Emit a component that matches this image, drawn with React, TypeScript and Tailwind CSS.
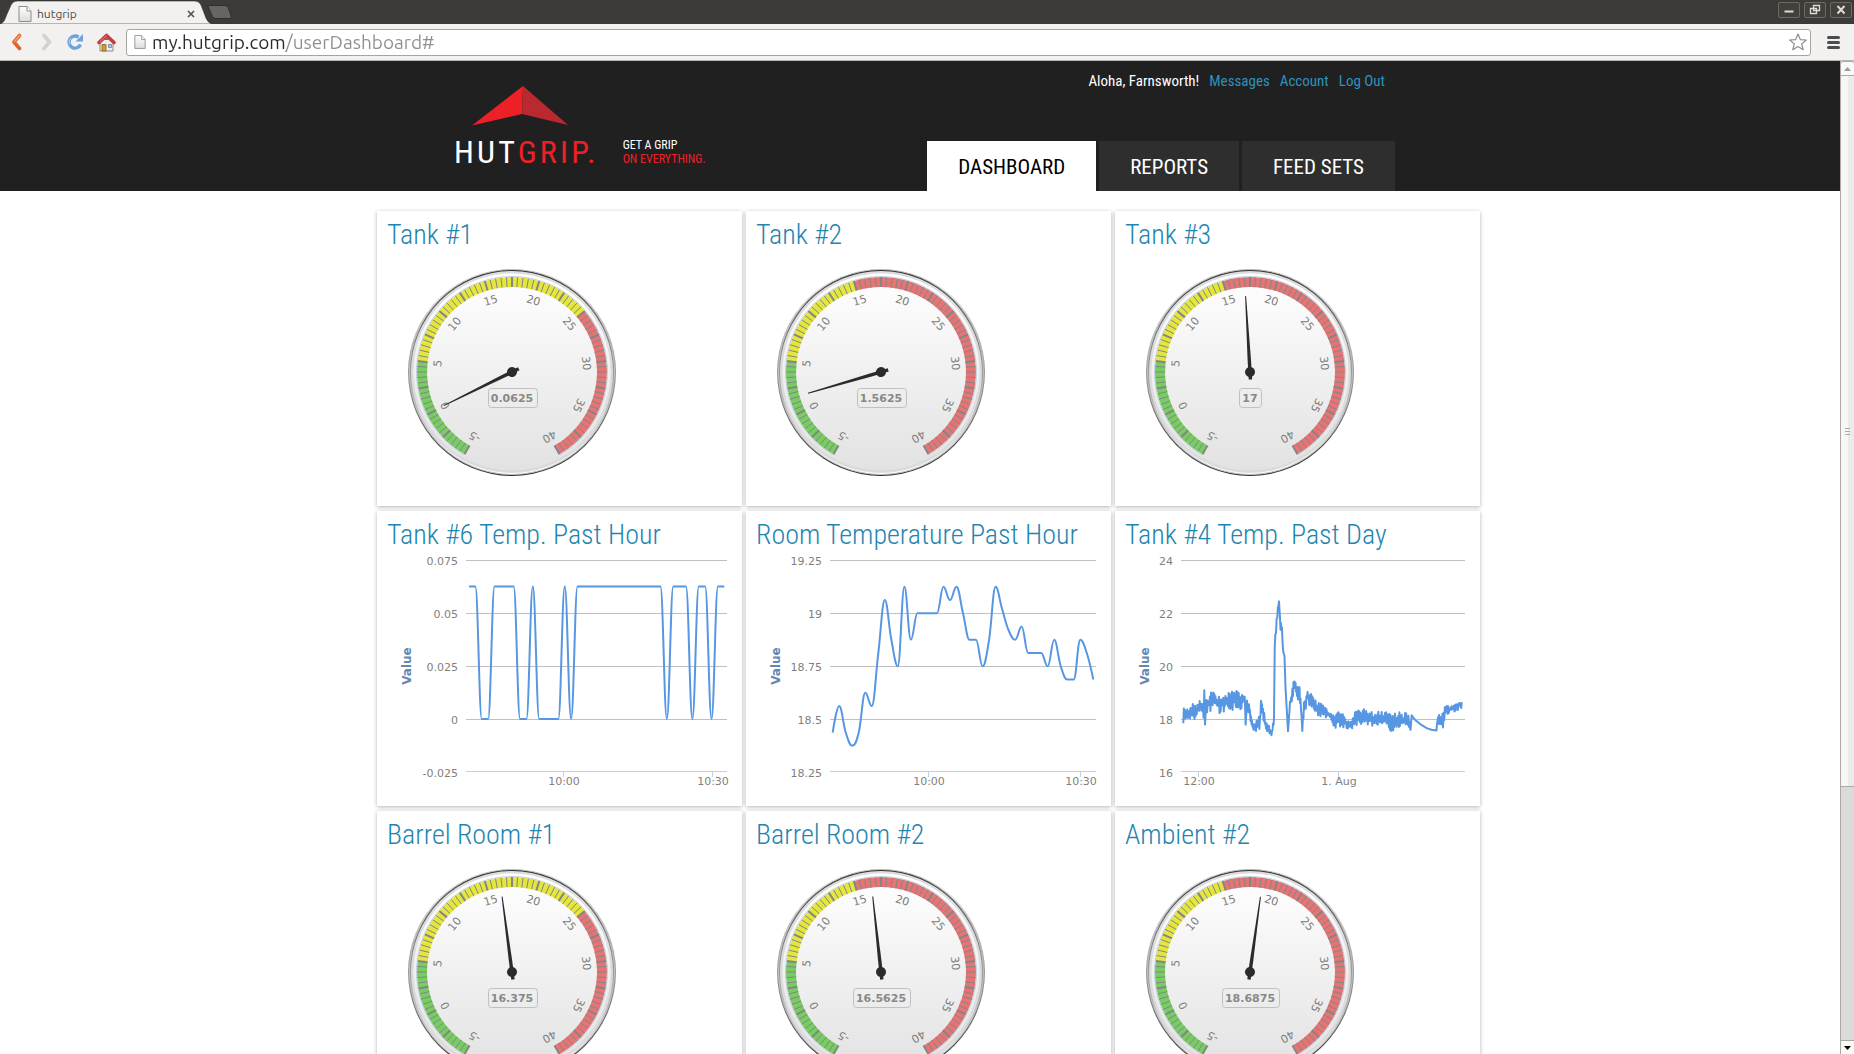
import React from 'react';

const DIN = "font-['Roboto_Condensed','Roboto',sans-serif]";
const VERDANA = 'DejaVu Sans, Verdana, sans-serif';

/* ---------- Browser chrome ---------- */

function PageIcon({ className }: { className: string }) {
  return (
    <svg viewBox="0 0 14 16" className={className} aria-hidden="true">
      <defs>
        <linearGradient id="paper" x1="0" y1="0" x2="0" y2="1">
          <stop offset="0" stopColor="#fff" />
          <stop offset="1" stopColor="#dcdcdc" />
        </linearGradient>
      </defs>
      <path d="M1 .5h8L13 5v10.5H1z" fill="url(#paper)" stroke="#8b8b8b" />
      <path d="M9 .5V5h4" fill="#fff" stroke="#8b8b8b" />
    </svg>
  );
}

function TitleBar() {
  return (
    <div className="flex h-6 shrink-0 items-start justify-between bg-[#3c3b37]">
      <div className="flex h-full">
        <div className="relative flex h-full w-[212px] items-center pt-[3px] pr-[15px] pl-[18px]">
          <svg viewBox="0 0 212 24" className="absolute inset-0 h-full w-full" aria-hidden="true">
            <path
              d="M0 24C4 23 5 19 7 14L11 5Q13 1 17 1H195Q199 1 201 5L206 18Q208 23 212 24Z"
              fill="#f2f1f0"
              stroke="#2b2a27"
              strokeWidth=".6"
            />
          </svg>
          <PageIcon className="relative h-4 w-[14px]" />
          <span className="relative ml-[5px] flex-1 font-['Ubuntu','Noto_Sans',sans-serif] text-xs text-[#4a4a4a]">
            hutgrip
          </span>
          <button type="button" aria-label="Close tab" className="relative flex h-3 w-3 items-center justify-center">
            <svg viewBox="0 0 8 8" className="h-2 w-2" aria-hidden="true">
              <path d="M1 1l6 6M7 1L1 7" stroke="#555" strokeWidth="1.7" />
            </svg>
          </button>
        </div>
        <button type="button" aria-label="New tab" className="-ml-[5px] flex h-full items-center">
          <svg viewBox="0 0 26 16" className="h-4 w-[26px]" aria-hidden="true">
            <path
              d="M2 1.5h16q2.500 0 3.200 2l3 8.500q.8 2.500-1.700 2.500H9q-2.500 0-3.500-2L1.200 3Q.8 1.500 2 1.500z"
              fill="#666561"
              stroke="#2f2e2b"
            />
          </svg>
        </button>
      </div>
      <div className="flex gap-1 pt-[2px] pr-[2px]">
        {[
          ['Minimize', 'M6.500 9.500h9'],
          ['Restore', 'M9.500 3.500h6v5h-6zM6.500 6.500h6v5h-6z'],
          ['Close', 'M7.500 4l7 7.500M14.500 4l-7 7.500'],
        ].map(([label, d]) => (
          <button
            key={label}
            type="button"
            aria-label={label}
            className="h-4 w-[22px] rounded-[2px] border border-[#6b6a66] bg-[#42413d]"
          >
            <svg viewBox="1 1 20 14" className="h-full w-full" aria-hidden="true">
              <path d={d} fill="none" stroke="#dfdbd2" strokeWidth={label === 'Restore' ? 1.300 : 2} />
            </svg>
          </button>
        ))}
      </div>
    </div>
  );
}

function Toolbar() {
  return (
    <div className="flex h-[37px] shrink-0 items-center border-b border-[#b7b6b2] bg-[#f2f1f0] pr-[14px] pl-[10px]">
      <div className="flex items-center gap-[13px]">
        <button type="button" aria-label="Back" className="h-[18px] w-[14px]">
          <svg viewBox="0 0 14 18" aria-hidden="true">
            <path d="M9.500 2.500L4 9l5.500 6.500" fill="none" stroke="#e2622f" strokeWidth="3.600" strokeLinecap="round" strokeLinejoin="round" />
            <path d="M9.500 2.500L4.500 8.500" fill="none" stroke="#f0a070" strokeWidth="1.600" strokeLinecap="round" />
          </svg>
        </button>
        <button type="button" aria-label="Forward" className="ml-[2px] h-[18px] w-[14px]">
          <svg viewBox="0 0 14 18" aria-hidden="true">
            <path d="M5 2.500L10.500 9 5 15.500" fill="none" stroke="#d3d2d0" strokeWidth="3.600" strokeLinecap="round" strokeLinejoin="round" />
          </svg>
        </button>
        <button type="button" aria-label="Reload" className="h-[18px] w-[18px]">
          <svg viewBox="0 0 18 18" aria-hidden="true">
            <path d="M14.500 11.500A6 6 0 1 1 12.500 4.200" fill="none" stroke="#6ba3dc" strokeWidth="3.400" />
            <path d="M9.500 8.500h7.500V1z" fill="#6ba3dc" />
            <path d="M4 11.500A5.500 5.500 0 0 1 5 5" fill="none" stroke="#a5c8ec" strokeWidth="1.200" />
          </svg>
        </button>
        <button type="button" aria-label="Home" className="h-[19px] w-[19px]">
          <svg viewBox="0 0 19 19" aria-hidden="true">
            <path d="M3 8.500L9.500 3l6.500 5.500V18H3z" fill="#efeeec" stroke="#8b8a86" />
            <path d="M2 9.500L9.500 2.500 17 9.500" fill="none" stroke="#c23e3e" strokeWidth="3.600" strokeLinejoin="round" strokeLinecap="round" />
            <path d="M9.500 3L5.500 7h8z" fill="#c94a4a" />
            <path d="M2.500 9l7-6.500" stroke="#e37f7f" strokeWidth="1" />
            <path d="M5 11.500h4V18H5z" fill="#d59b2d" stroke="#8a6420" strokeWidth=".8" />
            <path d="M11.500 11.500h3v3h-3z" fill="#aac6e6" stroke="#6d7f99" strokeWidth=".8" />
          </svg>
        </button>
      </div>
      <div className="ml-[10px] flex h-[27px] flex-1 items-center rounded-[3px] border border-[#a5a4a0] bg-white pr-[3px] pl-[7px]">
        <PageIcon className="h-4 w-3" />
        <input
          type="text"
          aria-label="Address"
          defaultValue="my.hutgrip.com/userDashboard#"
          className="ml-[6px] h-6 min-w-0 flex-1 bg-[linear-gradient(90deg,#2b2b2b_134px,#8f8f8f_134px)] bg-clip-text font-['Ubuntu','Noto_Sans',sans-serif] text-[19px] text-transparent outline-none"
        />
        <button type="button" aria-label="Bookmark" className="h-[18px] w-[18px]">
          <svg viewBox="0 0 18 18" aria-hidden="true">
            <path
              d="M9 1l2.300 5.600 6 .4-4.600 3.900 1.500 5.900L9 13.600l-5.200 3.200 1.500-5.900L.7 7l6-.4z"
              fill="#fff"
              stroke="#8c8c8c"
              strokeWidth="1.200"
              strokeLinejoin="round"
            />
          </svg>
        </button>
      </div>
      <button type="button" aria-label="Menu" className="ml-4 flex w-[13px] flex-col gap-[2px]">
        <span className="h-[3px] rounded-full bg-[#4c4c4c]" />
        <span className="h-[3px] rounded-full bg-[#4c4c4c]" />
        <span className="h-[3px] rounded-full bg-[#4c4c4c]" />
      </button>
    </div>
  );
}

function Scrollbar() {
  return (
    <div className="flex w-[14px] shrink-0 flex-col border-l border-[#aaa9a6] bg-[#dcdbda]">
      <button type="button" aria-label="Scroll up" className="flex h-[15px] shrink-0 items-center justify-center rounded-t-[3px] border-y border-[#aaa9a6] bg-[#fafaf9]">
        <svg viewBox="0 0 7 4" className="h-1 w-[7px]" aria-hidden="true">
          <path d="M3.500 0L7 4H0z" fill="#999" />
        </svg>
      </button>
      <div className="flex grow-[706] flex-col items-center justify-center gap-[2px] border-b border-[#aaa9a6] bg-linear-to-r from-[#f7f7f5] from-50% to-[#ebebea] to-50%">
        <span className="h-px w-[5px] bg-[#aaa]" />
        <span className="h-px w-[5px] bg-[#aaa]" />
        <span className="h-px w-[5px] bg-[#aaa]" />
      </div>
      <div className="grow-[254]" />
      <button type="button" aria-label="Scroll down" className="flex h-[14px] shrink-0 items-center justify-center border-t border-[#aaa9a6] bg-[#fafaf9]">
        <svg viewBox="0 0 7 4" className="h-1 w-[7px]" aria-hidden="true">
          <path d="M0 0h7L3.500 4z" fill="#000" />
        </svg>
      </button>
    </div>
  );
}

/* ---------- Site header ---------- */

function Header() {
  const tab = 'flex h-[50px] items-center px-[31px] pt-[3px] text-[21px]';
  return (
    <header className={`bg-[#202020] ${DIN}`}>
      <div className="mx-auto flex h-[130px] w-[950px] justify-between">
        <a href="#" className="flex items-end gap-6 pb-[25px] pl-[9px]">
          <span className="flex flex-col">
            <svg viewBox="0 0 96 40" className="ml-[18px] h-10 w-24" aria-hidden="true">
              <path d="M51 0L0 39.500 50 28z" fill="#ee2027" />
              <path d="M51 0L50 28 96 39z" fill="#b9292f" />
            </svg>
            <span className="mt-3 text-[32px] leading-7 tracking-widest text-white">
              HUT<span className="text-[#ee2027]">GRIP.</span>
            </span>
          </span>
          <span className="text-[12px] leading-[14px] text-white">
            GET A GRIP
            <br />
            <span className="text-[#ee2027]">ON EVERYTHING.</span>
          </span>
        </a>
        <div className="flex flex-col items-end justify-between">
          <div className="flex gap-[10px] pt-[9px] pr-[10px] text-[15px] leading-[22px] text-[#2c93be]">
            <span className="text-white">Aloha, Farnsworth!</span>
            <a href="#">Messages</a>
            <a href="#">Account</a>
            <a href="#">Log Out</a>
          </div>
          <nav className="flex gap-[3px] text-white">
            <a href="#" className={`${tab} bg-white text-black`}>DASHBOARD</a>
            <a href="#" className={`${tab} bg-[#2e2e2e]`}>REPORTS</a>
            <a href="#" className={`${tab} bg-[#2e2e2e]`}>FEED SETS</a>
          </nav>
        </div>
      </div>
    </header>
  );
}

/* ---------- Gauge ---------- */

const MIN = -5;
const MAX = 40;
const CX = 135;
const CY = 122;
const toDeg = (v: number) => -150 + ((v - MIN) * 300) / (MAX - MIN);

function polar(r: number, deg: number) {
  const a = (deg * Math.PI) / 180;
  return [CX + r * Math.sin(a), CY - r * Math.cos(a)];
}

function band(from: number, to: number) {
  const a = toDeg(from);
  const b = toDeg(to);
  const large = b - a > 180 ? 1 : 0;
  const [x1, y1] = polar(95, a);
  const [x2, y2] = polar(95, b);
  const [x3, y3] = polar(85, b);
  const [x4, y4] = polar(85, a);
  return `M${x1} ${y1}A95 95 0 ${large} 1 ${x2} ${y2}L${x3} ${y3}A85 85 0 ${large} 0 ${x4} ${y4}Z`;
}

function Gauge({ value, warn }: { value: number; warn: number }) {
  const text = String(value);
  const boxWidth = Math.round(text.replace('.', '').length * 7.65 + (text.includes('.') ? 4 : 0) + 7);
  const ticks = Array.from({ length: 91 }, (_, i) => MIN + i * 0.5);
  const labels = [-5, 0, 5, 10, 15, 20, 25, 30, 35, 40];
  return (
    <svg viewBox="0 0 270 245" width="270" height="245" role="img" aria-label={`Gauge reading ${text}`}>
      <defs>
        <linearGradient id="rimOuter" x1="0" y1="0" x2="0" y2="1">
          <stop offset="0" stopColor="#fff" />
          <stop offset="1" stopColor="#333" />
        </linearGradient>
        <linearGradient id="rimInner" x1="0" y1="0" x2="0" y2="1">
          <stop offset="0" stopColor="#333" />
          <stop offset="1" stopColor="#fff" />
        </linearGradient>
        <linearGradient id="face" x1="0" y1="0" x2="0" y2="1">
          <stop offset="0" stopColor="#fff" />
          <stop offset="1" stopColor="#e2e2e2" />
        </linearGradient>
      </defs>
      <circle cx={CX} cy={CY} r="104" fill="url(#rimOuter)" />
      <circle cx={CX} cy={CY} r="102.500" fill="url(#rimInner)" stroke="#c0c0c0" />
      <circle cx={CX} cy={CY} r="101" fill="#ddd" />
      <circle cx={CX} cy={CY} r="99" fill="url(#face)" stroke="#d0d0d0" strokeWidth=".5" />
      <path d={band(MIN, 5)} fill="#77cc62" />
      <path d={band(5, warn)} fill="#e4e53d" />
      <path d={band(warn, MAX)} fill="#e57575" />
      {ticks.map((v, i) => {
        const [x1, y1] = polar(95, toDeg(v));
        const [x2, y2] = polar(85, toDeg(v));
        return <line key={v} x1={x1} y1={y1} x2={x2} y2={y2} stroke="#858585" strokeWidth={i % 5 === 0 ? 2 : 1} />;
      })}
      <path
        d={`M${polar(95.5, -150).join(' ')}A95.5 95.5 0 1 1 ${polar(95.5, 150).join(' ')}`}
        fill="none"
        stroke="#c0d0e0"
      />
      <g fontFamily={VERDANA} fontSize="11" fill="#7c7c7c" textAnchor="middle">
        {labels.map((v) => {
          const [x, y] = polar(75, toDeg(v));
          return (
            <text key={v} transform={`translate(${x} ${y}) rotate(${toDeg(v)})`} y="4">
              {v}
            </text>
          );
        })}
      </g>
      <rect x={CX - Math.floor(boxWidth / 2) + 0.5} y="138.500" width={boxWidth} height="19" rx="3" fill="none" stroke="#c0c0c0" />
      <text x={CX} y="152" fontFamily={VERDANA} fontSize="11" fontWeight="bold" fill="#888" textAnchor="middle">
        {text}
      </text>
      <g transform={`translate(${CX} ${CY}) rotate(${toDeg(value)})`} fill="#2b2b2b">
        <path d="M-1.700 7.500L-1.700 -12L-.5 -76H.5L1.700 -12L1.700 7.500Z" />
        <circle r="5" />
      </g>
    </svg>
  );
}

/* ---------- Line charts ---------- */

type Point = [number, number];
const GRID = [10.5, 63.5, 116.5, 169.5];

function splinePath(pts: Point[]) {
  const slope = (i: number) => {
    if (i === 0 || i === pts.length - 1) return 0;
    const [x0, y0] = pts[i - 1];
    const [, y1] = pts[i];
    const [x2, y2] = pts[i + 1];
    return (y1 - y0) * (y2 - y1) <= 0 ? 0 : (y2 - y0) / (x2 - x0);
  };
  let d = `M${pts[0][0]} ${pts[0][1]}`;
  for (let i = 1; i < pts.length; i++) {
    const [x0, y0] = pts[i - 1];
    const [x1, y1] = pts[i];
    const h = (x1 - x0) * 0.4;
    const c0 = i === 1 ? [x0, y0] : [x0 + h, y0 + slope(i - 1) * h];
    const c1 = i === pts.length - 1 ? [x1, y1] : [x1 - h, y1 - slope(i) * h];
    d += `C${c0[0]} ${c0[1]} ${c1[0]} ${c1[1]} ${x1} ${y1}`;
  }
  return d;
}

interface ChartProps {
  left: number;
  yLabels: string[];
  xLabels: [number, string][];
  path: string;
}

function LineChart({ left, yLabels, xLabels, path }: ChartProps) {
  return (
    <svg viewBox="0 0 365 245" width="365" height="245" role="img" aria-label="Temperature history">
      {GRID.map((y) => (
        <line key={y} x1={left} x2="350" y1={y} y2={y} stroke="#c0c0c0" />
      ))}
      <line x1={left} x2="350" y1="221.500" y2="221.500" stroke="#c0d0e0" />
      {xLabels.map(([x]) => (
        <line key={x} x1={x + 0.5} x2={x + 0.5} y1="222" y2="227" stroke="#c0d0e0" />
      ))}
      <path d={path} fill="none" stroke="#5796e2" strokeWidth="2" strokeLinejoin="round" />
      <g fontFamily={VERDANA} fontSize="11" fill="#7f7f7f">
        {yLabels.map((t, i) => (
          <text key={t} x={left - 8} y={15 + i * 53} textAnchor="end">
            {t}
          </text>
        ))}
        {xLabels.map(([x, t]) => (
          <text key={t} x={x + 1} y="235" textAnchor="middle">
            {t}
          </text>
        ))}
      </g>
      <text
        transform="translate(34 116) rotate(-90)"
        fontFamily={VERDANA}
        fontSize="12"
        fontWeight="bold"
        fill="#6488b2"
        textAnchor="middle"
      >
        Value
      </text>
    </svg>
  );
}

const sample = (values: number[], x0: number, x1: number, y: (v: number) => number) =>
  splinePath(values.map((v, i): Point => [x0 + (i * (x1 - x0)) / (values.length - 1), y(v)]));

/* Tank #6 toggles between 0 and 0.0625 */
const tank6Path = sample(
  [...'11001111001000010111111111111110111011011'].map(Number),
  92,
  347.3,
  (v) => 169 - v * 132.5,
);

const roomPath = sample(
  [
    18.4375, 18.5625, 18.4375, 18.375, 18.4375, 18.625, 18.5625, 18.8125, 19.0625, 18.875, 18.75, 19.125, 18.875, 19,
    19, 19, 19, 19.125, 19.0625, 19.125, 19, 18.875, 18.875, 18.75, 18.875, 19.125, 19.02, 18.92, 18.875, 18.9375,
    18.8125, 18.8125, 18.8125, 18.75, 18.875, 18.75, 18.6875, 18.6875, 18.875, 18.8125, 18.6875,
  ],
  86.7,
  347.3,
  (v) => 63.3 + (19 - v) * 212,
);

/* x, value, spread of the readings around it */
const DAY: [number, number, number][] = [
  [68.300, 18.15, 0.22], [75, 18.25, 0.25], [80, 18.3, 0.25], [83, 18.5, 0.15], [87.5, 18.5, 0.2], [88.6, 18.1, 0.2],
  [89.300, 19.1, 0], [90, 17.8, 0], [91, 18.5, 0.2], [96, 18.65, 0.3], [101, 18.7, 0.3], [104, 18.6, 0.35],
  [112, 18.7, 0.28], [122, 18.75, 0.28], [127, 18.65, 0.2], [129.7, 18.9, 0.1], [130.6, 17.8, 0], [132, 18.6, 0.1],
  [134, 18.4, 0.15], [136.5, 17.9, 0.1], [138, 17.65, 0.1], [141, 17.8, 0.2], [145, 17.85, 0.2], [146, 18.7, 0],
  [148, 18.25, 0.15], [151, 17.75, 0.15], [154, 17.7, 0.2], [156.5, 17.4, 0], [158, 17.8, 0.2], [159, 18, 0.1],
  [159.7, 20.8, 0.1], [161, 21.3, 0.15], [162.3, 22, 0.15], [164, 22.45, 0], [165.5, 21.5, 0.15], [167, 21.3, 0.2],
  [168, 20.6, 0.05], [169.5, 20.4, 0.1], [170.5, 19.2, 0.05], [173, 17.55, 0], [175, 18.6, 0.1], [178, 19.1, 0.25],
  [179.5, 19.4, 0.05], [182, 19, 0.2], [184.5, 19, 0.2], [186, 18.4, 0.1], [187.3, 17.6, 0.05], [189, 18.5, 0.3],
  [192, 18.9, 0.22], [196, 18.7, 0.2], [201, 18.45, 0.2], [206, 18.35, 0.18], [212, 18.25, 0.15], [217, 18.05, 0.2],
  [219.5, 17.85, 0.15], [224, 18.05, 0.25], [230, 17.9, 0.2], [236, 17.75, 0.15], [240, 18.05, 0.2], [250, 18.1, 0.22],
  [260, 18, 0.22], [270, 18.1, 0.18], [276, 17.85, 0.25], [285, 18, 0.22], [294, 17.95, 0.2], [295.5, 17.6, 0],
  [296.7, 18.15, 0], [300, 17.98, 0], [306, 17.8, 0], [312, 17.66, 0], [317, 17.6, 0], [321.5, 17.58, 0],
  [322.5, 18, 0.15], [328, 18, 0.25], [331, 18.35, 0.15], [340, 18.4, 0.18], [344, 18.6, 0.15], [347.3, 18.4, 0.25],
];

function noisyPath() {
  let seed = 7;
  const random = () => {
    seed = (seed * 16807) % 2147483647;
    return (seed / 2147483647) * 2 - 1;
  };
  let d = '';
  let side = 1;
  for (let i = 0; i < DAY.length - 1; i++) {
    const [x0, v0, s0] = DAY[i];
    const [x1, v1, s1] = DAY[i + 1];
    const n = Math.max(1, Math.round((x1 - x0) / 0.55));
    for (let k = 0; k < n; k++) {
      const t = k / n;
      side = -side;
      const v = v0 + (v1 - v0) * t + side * Math.abs(random()) * (s0 + (s1 - s0) * t) * 1.35;
      d += `${d ? 'L' : 'M'}${x0 + (x1 - x0) * t} ${169.3 - (v - 18) * 26.5}`;
    }
  }
  return d;
}

const dayPath = noisyPath();

/* ---------- Dashboard ---------- */

function Card({ title, children }: { title: string; children: React.ReactNode }) {
  return (
    <section className="h-[295px] bg-white shadow-[0_1px_4px_rgba(0,0,0,0.3)]">
      <h2 className={`h-[39px] pt-2 pl-[10px] text-[28px] leading-[31px] font-light whitespace-nowrap text-[#1f86b0] ${DIN}`}>
        {title}
      </h2>
      {children}
    </section>
  );
}

export default function App() {
  return (
    <div className="flex h-screen flex-col overflow-hidden bg-white">
      <TitleBar />
      <Toolbar />
      <div className="flex min-h-0 flex-1">
        <div className="min-w-0 flex-1 overflow-hidden">
          <Header />
          <main className="mx-auto grid w-[1120px] grid-cols-[repeat(3,365px)] gap-x-1 gap-y-[5px] pt-5 pl-[17px]">
            <Card title="Tank #1"><Gauge value={0.0625} warn={25} /></Card>
            <Card title="Tank #2"><Gauge value={1.5625} warn={15} /></Card>
            <Card title="Tank #3"><Gauge value={17} warn={15} /></Card>
            <Card title="Tank #6 Temp. Past Hour">
              <LineChart
                left={89}
                yLabels={['0.075', '0.05', '0.025', '0', '-0.025']}
                xLabels={[[186, '10:00'], [335, '10:30']]}
                path={tank6Path}
              />
            </Card>
            <Card title="Room Temperature Past Hour">
              <LineChart
                left={84}
                yLabels={['19.25', '19', '18.75', '18.5', '18.25']}
                xLabels={[[182, '10:00'], [334, '10:30']]}
                path={roomPath}
              />
            </Card>
            <Card title="Tank #4 Temp. Past Day">
              <LineChart
                left={66}
                yLabels={['24', '22', '20', '18', '16']}
                xLabels={[[83, '12:00'], [223, '1. Aug']]}
                path={dayPath}
              />
            </Card>
            <Card title="Barrel Room #1"><Gauge value={16.375} warn={25} /></Card>
            <Card title="Barrel Room #2"><Gauge value={16.5625} warn={15} /></Card>
            <Card title="Ambient #2"><Gauge value={18.6875} warn={15} /></Card>
          </main>
        </div>
        <Scrollbar />
      </div>
    </div>
  );
}
